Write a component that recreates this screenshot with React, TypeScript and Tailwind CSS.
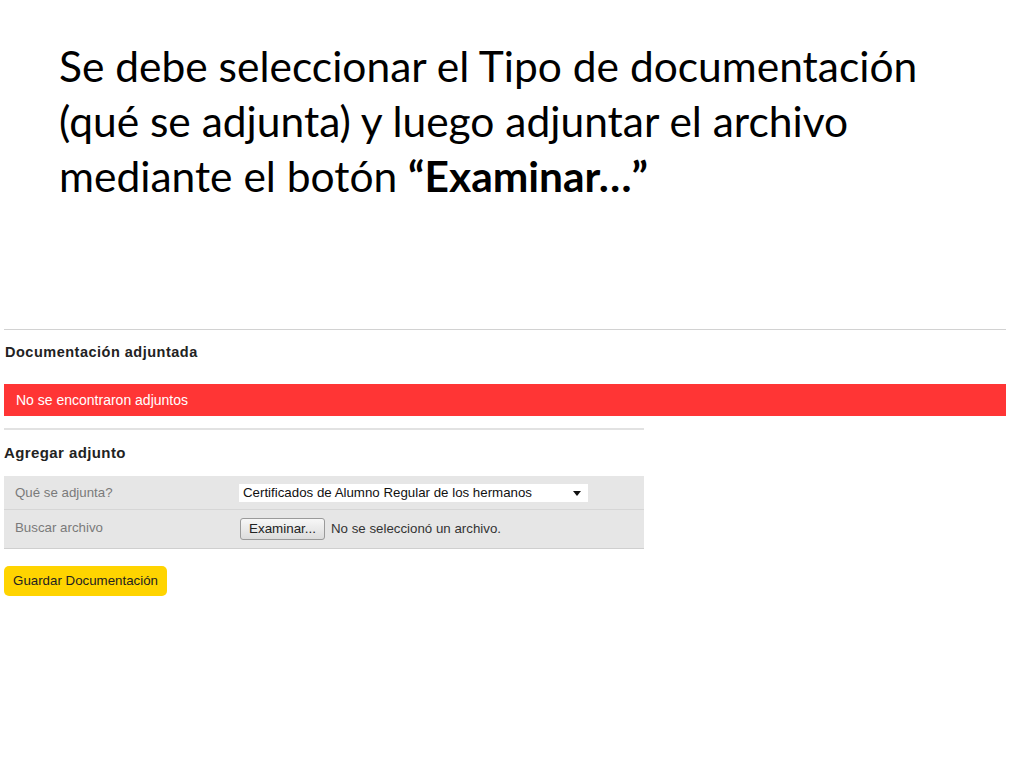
import React from "react";

const App = () => {
    return (
        <div className="min-h-screen w-[1024px] bg-white">
            <div
                className="pl-[59px] pt-[38px] text-[42.5px] leading-[55px] text-black"
                style={{ fontFamily: 'Lato, "Open Sans", sans-serif' }}
            >
                Se debe seleccionar el Tipo de documentación
                <br />
                (qué se adjunta) y luego adjuntar el archivo
                <br />
                mediante el botón <span className="font-bold">“Examinar…”</span>
            </div>

            <div
                className="mt-[126px] ml-[4px] w-[1002px] text-[13.3px]"
                style={{ fontFamily: '"Liberation Sans", Arial, sans-serif' }}
            >
                <div className="h-px bg-[#d2d2d2]" />
                <div className="flex h-[46px] items-center pl-px text-[14.5px] font-bold tracking-[0.5px] text-[#222]">
                    Documentación adjuntada
                </div>
                <div className="mt-[8px] flex h-[32px] items-center bg-[#ff3535] pl-[12px] text-[14px] text-white">
                    No se encontraron adjuntos
                </div>

                <div className="mt-[12px] w-[640px]">
                    <div className="h-[2px] bg-[#e2e2e2]" />
                    <div className="flex h-[46px] items-center text-[15px] font-bold tracking-[0.4px] text-[#222]">
                        Agregar adjunto
                    </div>
                    <div className="bg-[#e6e6e6]">
                        <div className="flex h-[34px] items-center border-b border-[#d6d6d6]">
                            <div className="w-[235px] pl-[11px] text-[#7a7a7a]">Qué se adjunta?</div>
                            <div className="relative flex h-[18px] w-[349px] items-center bg-white pl-[4px] text-[#111]">
                                Certificados de Alumno Regular de los hermanos
                                <svg className="absolute right-[7px] top-[7px]" width="8" height="5" viewBox="0 0 8 5">
                                    <path d="M0 0H8L4 5Z" fill="#111" />
                                </svg>
                            </div>
                        </div>
                        <div className="flex h-[39px] items-start border-b border-[#cfcfcf]">
                            <div className="w-[235px] pl-[11px] pt-[8px] text-[#7a7a7a]">Buscar archivo</div>
                            <div className="flex items-center pt-[8px]">
                                <div className="ml-px flex h-[22px] w-[85px] items-center justify-center rounded-[3px] border border-[#9a9a9a] bg-gradient-to-b from-[#f7f7f7] to-[#dcdcdc] text-[13.4px] text-[#222]">
                                    Examinar...
                                </div>
                                <span className="ml-[6px] text-[#333]">No se seleccionó un archivo.</span>
                            </div>
                        </div>
                    </div>
                    <div className="mt-[17px] flex h-[30px] w-[163px] items-center justify-center rounded-[5px] bg-[#ffd400] text-[#222]">
                        Guardar Documentación
                    </div>
                </div>
            </div>
        </div>
    );
};

export default App;
